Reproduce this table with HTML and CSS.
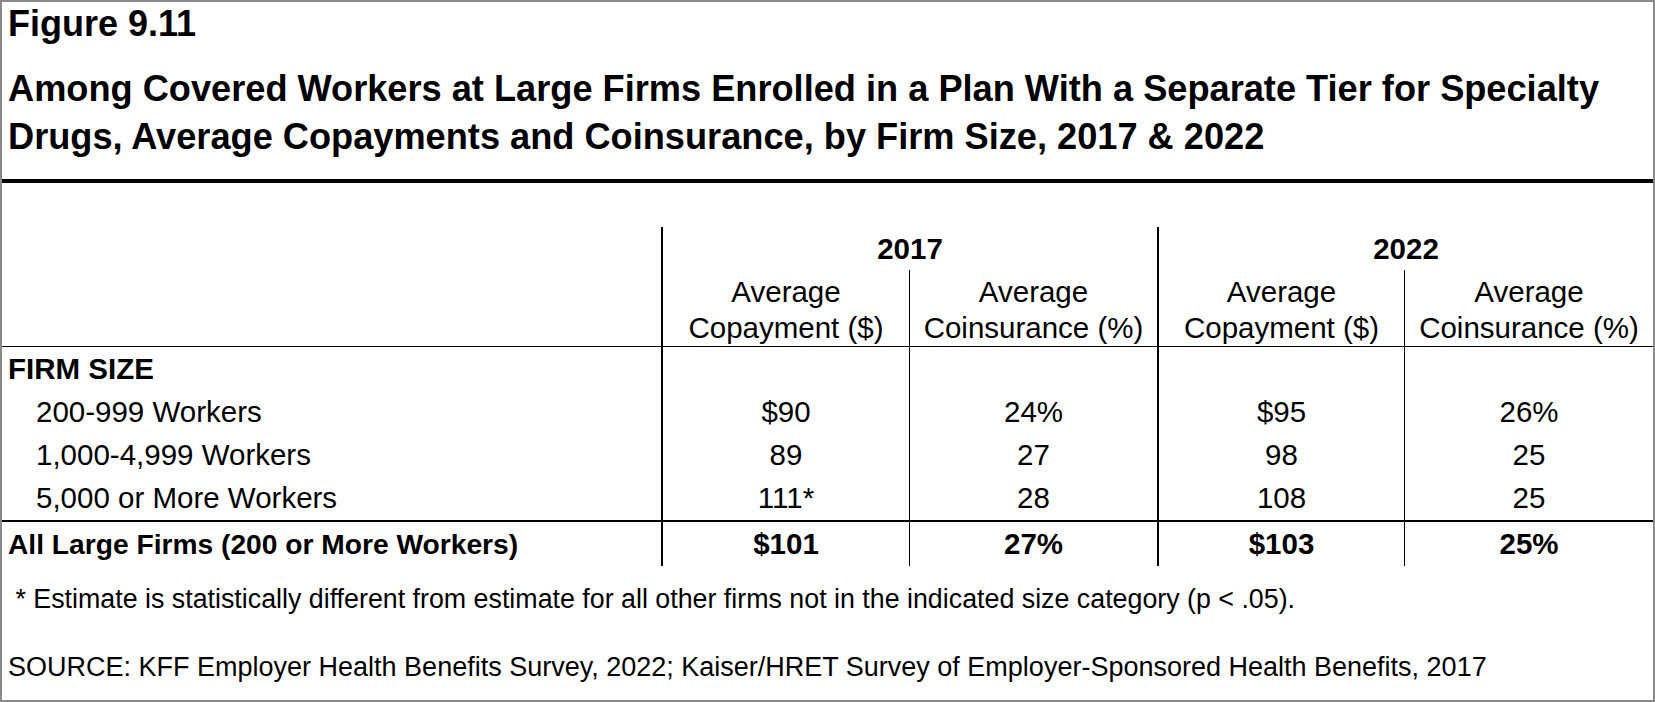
FILE: index.html
```html
<!DOCTYPE html>
<html lang="en">
<head>
<meta charset="utf-8">
<title>Figure 9.11</title>
<link rel="stylesheet" href="styles.css">
</head>
<body>
<div class="figure">
  <header class="fig-head">
    <div class="fig-num">Figure 9.11</div>
    <h1 class="fig-title">Among Covered Workers at Large Firms Enrolled in a Plan With a Separate Tier for Specialty Drugs, Average Copayments and Coinsurance, by Firm Size, 2017 &amp; 2022</h1>
  </header>

  <div class="grid">
    <div class="cell blank"></div>
    <div class="cell year thick span2">2017</div>
    <div class="cell year thick span2">2022</div>

    <div class="cell sub blank"></div>
    <div class="cell sub thick">Average<br>Copayment ($)</div>
    <div class="cell sub thin">Average<br>Coinsurance (%)</div>
    <div class="cell sub thick">Average<br>Copayment ($)</div>
    <div class="cell sub thin">Average<br>Coinsurance (%)</div>

    <div class="cell row label bold">FIRM SIZE</div>
    <div class="cell row thick"></div>
    <div class="cell row thin"></div>
    <div class="cell row thick"></div>
    <div class="cell row thin"></div>

    <div class="cell row label indent">200-999 Workers</div>
    <div class="cell row thick num">$90</div>
    <div class="cell row thin num">24%</div>
    <div class="cell row thick num">$95</div>
    <div class="cell row thin num">26%</div>

    <div class="cell row label indent">1,000-4,999 Workers</div>
    <div class="cell row thick num">89</div>
    <div class="cell row thin num">27</div>
    <div class="cell row thick num">98</div>
    <div class="cell row thin num">25</div>

    <div class="cell row last label indent">5,000 or More Workers</div>
    <div class="cell row last thick num">111*</div>
    <div class="cell row last thin num">28</div>
    <div class="cell row last thick num">108</div>
    <div class="cell row last thin num">25</div>

    <div class="cell total label bold total-label">All Large Firms (200 or More Workers)</div>
    <div class="cell total thick num bold">$101</div>
    <div class="cell total thin num bold">27%</div>
    <div class="cell total thick num bold">$103</div>
    <div class="cell total thin num bold">25%</div>
  </div>

  <p class="note"> * Estimate is statistically different from estimate for all other firms not in the indicated size category (p &lt; .05).</p>
  <p class="source">SOURCE: KFF Employer Health Benefits Survey, 2022; Kaiser/HRET Survey of Employer-Sponsored Health Benefits, 2017</p>
</div>
</body>
</html>
```

FILE: styles.css
```css
html, body {
  margin: 0;
  padding: 0;
  background: #ffffff;
}

body {
  font-family: "Liberation Sans", Arial, sans-serif;
  color: #000000;
}

.figure {
  box-sizing: border-box;
  width: 1655px;
  height: 702px;
  border: 2px solid #8a8a8a;
  overflow: hidden;
}

.fig-head {
  border-bottom: 4px solid #000000;
  padding: 0 6px 18px 6px;
}

.fig-num {
  font-weight: bold;
  font-size: 36px;
  line-height: 44px;
}

.fig-title {
  margin: 19px 0 0 0;
  font-weight: bold;
  font-size: 36.2px;
  line-height: 48px;
}

.grid {
  margin-top: 44px;
  display: grid;
  grid-template-columns: 659px 248px 248px 247px 1fr;
  grid-template-rows: 43px 77px 43px 43px 43px 44px 46px;
  font-size: 29.5px;
}

.cell {
  box-sizing: border-box;
  white-space: nowrap;
}

.span2 {
  grid-column: span 2;
}

.thick {
  border-left: 2px solid #000000;
}

.thin {
  border-left: 1px solid #000000;
}

.year {
  font-weight: bold;
  text-align: center;
  line-height: 43px;
}

.sub {
  border-bottom: 1px solid #000000;
  text-align: center;
  padding-top: 4px;
  line-height: 36.4px;
}

.row {
  line-height: 43px;
}

.row.last {
  line-height: 44px;
}

.total {
  border-top: 2px solid #000000;
  line-height: 44px;
}

.label {
  padding-left: 6px;
}

.indent {
  padding-left: 34px;
}

.total-label {
  font-size: 28.2px;
}

.num {
  text-align: center;
}

.bold {
  font-weight: bold;
}

.note {
  margin: 15px 0 0 0;
  padding-left: 6px;
  font-size: 26.8px;
  line-height: 36px;
  white-space: pre;
}

.source {
  margin: 32px 0 0 0;
  padding-left: 6px;
  font-size: 27px;
  line-height: 36px;
}
```
